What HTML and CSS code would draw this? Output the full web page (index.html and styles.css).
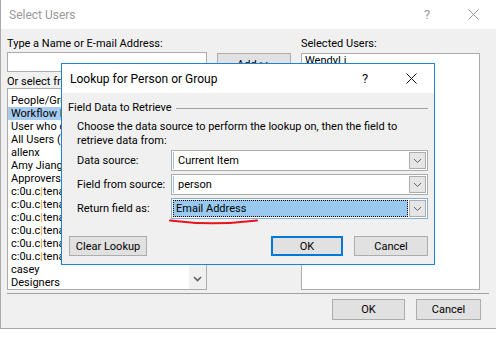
FILE: index.html
```html
<!DOCTYPE html>
<html lang="en">
<head>
<meta charset="UTF-8" />
<title>Select Users</title>
<link rel="stylesheet" href="styles.css">
</head>
<body>
  <!-- Background dialog -->
  <div class="win">
    <div class="win-title">
      <span class="win-name">Select Users</span>
      <span class="cap cap-help">?</span>
      <span class="cap">
        <svg width="11" height="11" viewBox="0 0 11 11"><path d="M0.5 0.5L10.5 10.5M10.5 0.5L0.5 10.5" stroke="#999" stroke-width="1"/></svg>
      </span>
    </div>

    <div class="win-body">
      <div class="pickers">
        <div class="col">
          <div class="lbl">Type a Name or E-mail Address:</div>
          <div class="textbox"></div>
          <div class="lbl lbl-gap">Or select from list:</div>
          <div class="listbox">
            <ul class="items">
              <li>People/Groups</li>
              <li class="sel">Workflow Lookup for a User...</li>
              <li>User who created current item</li>
              <li>All Users (windows)</li>
              <li>allenx</li>
              <li>Amy Jiang</li>
              <li>Approvers</li>
              <li>c:0u.c<span class="pipe">|</span>tenant</li>
              <li>c:0u.c<span class="pipe">|</span>tenant</li>
              <li>c:0u.c<span class="pipe">|</span>tenant</li>
              <li>c:0u.c<span class="pipe">|</span>tenant</li>
              <li>c:0u.c<span class="pipe">|</span>tenant</li>
              <li>c:0u.c<span class="pipe">|</span>tenant</li>
              <li>casey</li>
              <li>Designers</li>
            </ul>
            <div class="vscroll">
              <svg width="9" height="6" viewBox="0 0 9 6"><path d="M1 1L4.5 4.5L8 1" fill="none" stroke="#606060" stroke-width="1.6"/></svg>
            </div>
          </div>
        </div>

        <div class="col">
          <button class="btn add">Add &gt;&gt;</button>
        </div>

        <div class="col">
          <div class="lbl">Selected Users:</div>
          <div class="selbox">
            <div class="sel-item">WendyLi</div>
          </div>
        </div>
      </div>

      <div class="sep"></div>

      <div class="actions">
        <button class="btn btn-ok">OK</button>
        <button class="btn btn-cancel">Cancel</button>
      </div>
    </div>
  </div>

  <!-- Lookup dialog on top -->
  <div class="lookup">
    <div class="lk-title">
      <span class="lk-name">Lookup for Person or Group</span>
      <span class="cap cap-dark">?</span>
      <span class="cap">
        <svg width="11" height="11" viewBox="0 0 11 11"><path d="M0.5 0.5L10.5 10.5M10.5 0.5L0.5 10.5" stroke="#111" stroke-width="1"/></svg>
      </span>
    </div>

    <div class="lk-body">
      <div class="group-head">Field Data to Retrieve</div>
      <div class="desc">Choose the data source to perform the lookup on, then the field to<br>retrieve data from:</div>

      <div class="fields">
        <div class="f-lbl">Data source:</div>
        <div class="combo">
          <span class="val">Current Item</span>
          <span class="drop"><svg width="9" height="6" viewBox="0 0 9 6"><path d="M1 1L4.5 4.5L8 1" fill="none" stroke="#606060" stroke-width="1"/></svg></span>
        </div>

        <div class="f-lbl">Field from source:</div>
        <div class="combo">
          <span class="val">person</span>
          <span class="drop"><svg width="9" height="6" viewBox="0 0 9 6"><path d="M1 1L4.5 4.5L8 1" fill="none" stroke="#606060" stroke-width="1"/></svg></span>
        </div>

        <div class="f-lbl">Return field as:</div>
        <div class="combo focus">
          <span class="val">Email Address</span>
          <span class="drop"><svg width="9" height="6" viewBox="0 0 9 6"><path d="M1 1L4.5 4.5L8 1" fill="none" stroke="#606060" stroke-width="1"/></svg></span>
        </div>
      </div>

      <div class="lk-actions">
        <button class="btn btn-clear">Clear Lookup</button>
        <button class="btn lk-ok">OK</button>
        <button class="btn lk-cancel">Cancel</button>
      </div>
    </div>
  </div>

  <!-- red hand-drawn underline -->
  <svg class="scribble" width="496" height="340" viewBox="0 0 496 340">
    <path d="M170 220.5 Q 212 226 257 220.5" fill="none" stroke="#e8141b" stroke-width="2" stroke-linecap="round"/>
  </svg>
</body>
</html>
```

FILE: styles.css
```css
/* -------------------------------------------------------------
   Globals
------------------------------------------------------------- */
*{box-sizing:border-box;margin:0;padding:0}
body{
  width:496px;height:340px;
  overflow:hidden;position:relative;
  background:#fff;
  font-family:"Segoe UI",Roboto,"Liberation Sans",sans-serif;
  font-size:11px;color:#000;
}
ul{list-style:none}
.btn{
  font:inherit;color:#000;
  background:#e1e1e1;
  border:1px solid #adadad;
}

/* -------------------------------------------------------------
   Background window: Select Users
------------------------------------------------------------- */
.win{
  height:329px;
  border-left:1px solid #aaa;
  border-bottom:1px solid #aaa;
  display:flex;flex-direction:column;
}
.win-title{
  height:29px;background:#fff;
  display:flex;align-items:center;
  padding-left:8px;
  font-size:12px;color:#9a9a9a;
}
.win-name{margin-right:auto}
.cap{
  width:46px;height:29px;
  display:flex;align-items:center;justify-content:center;
}
.cap-help{font-size:13px;color:#9a9a9a}
.cap-dark{font-size:13px;color:#111}

.win-body{
  flex:1;background:#f0f0f0;
  padding:8px 7px 0 6px;
}
.pickers{
  display:grid;
  grid-template-columns:200px 74px 179px;
  column-gap:10px;
}
.col{display:flex;flex-direction:column}
.lbl{line-height:13px}
.lbl-gap{margin-top:3px}
.textbox{
  margin-top:2px;height:20px;
  background:#fff;border:1px solid #acacac;
}
.listbox{
  height:202px;
  background:#fff;border:1px solid #acacac;
  display:flex;
}
.items{flex:1;padding-top:5px;overflow:hidden}
.items li{
  line-height:13px;padding-left:3px;
  white-space:nowrap;overflow:hidden;
}
.items li.sel{background:#a6cbf0}
.pipe{color:#e49b1c}
.vscroll{
  width:17px;background:#f0f0f0;
  display:flex;align-items:flex-end;justify-content:center;
  padding-bottom:7px;
}
.add{margin-top:16px;height:23px}
.selbox{
  flex:1;margin-top:3px;
  background:#fff;border:1px solid #acacac;
  padding:0 3px;
}
.sel-item{line-height:13px}

.sep{margin-top:3px;height:1px;background:#a0a0a0}
.actions{
  display:flex;justify-content:flex-end;gap:11px;
  margin-top:5px;padding-right:8px;
}
.actions .btn{height:21px}
.btn-ok{width:73px}
.btn-cancel{width:65px}

/* -------------------------------------------------------------
   Lookup dialog (floats over the window)
------------------------------------------------------------- */
.lookup{
  position:absolute;left:61px;top:63px;
  width:374px;height:202px;
  border:1px solid #1a82d8;
  background:#f0f0f0;
  display:flex;flex-direction:column;
}
.lk-title{
  height:29px;background:#fff;
  display:flex;align-items:center;
  padding-left:8px;font-size:12px;
}
.lk-name{margin-right:auto}
.lk-body{padding:8px 6px 0 6px}
.group-head{
  display:flex;align-items:center;gap:4px;
  line-height:14px;
}
.group-head::after{content:"";flex:1;height:1px;background:#a0a0a0}
.desc{margin:5px 0 0 9px;line-height:14px}

.fields{
  display:grid;
  grid-template-columns:94px 257px;
  row-gap:3px;align-items:center;
  margin:2px 0 0 9px;
}
.combo{
  height:21px;
  background:#fff;border:1px solid #acacac;
  display:flex;align-items:center;
}
.combo .val{
  flex:1;padding-left:4px;
  border-left:1px solid #9cc3e6;
  margin-left:1px;line-height:17px;
}
.combo .drop{
  width:17px;height:17px;margin:0 1px 0 0;
  background:#e5e5e5;border:1px solid #acacac;
  display:flex;align-items:center;justify-content:center;
}
.combo.focus{border-color:#86aed3}
.combo.focus .val{
  height:17px;margin:0 1px;border-left:none;
  background:#99c9ef;
  outline:1px dotted #000;outline-offset:-1px;
  padding-left:3px;
}

.lk-actions{
  display:flex;margin-top:17px;
}
.lk-actions .btn{height:20px}
.btn-clear{width:78px;margin-left:1px}
.lk-ok{width:72px;margin-left:auto;border:2px solid #0078d7}
.lk-cancel{width:74px;margin-left:11px}

/* -------------------------------------------------------------
   Annotation overlay
------------------------------------------------------------- */
.scribble{position:absolute;left:0;top:0;pointer-events:none}
```
